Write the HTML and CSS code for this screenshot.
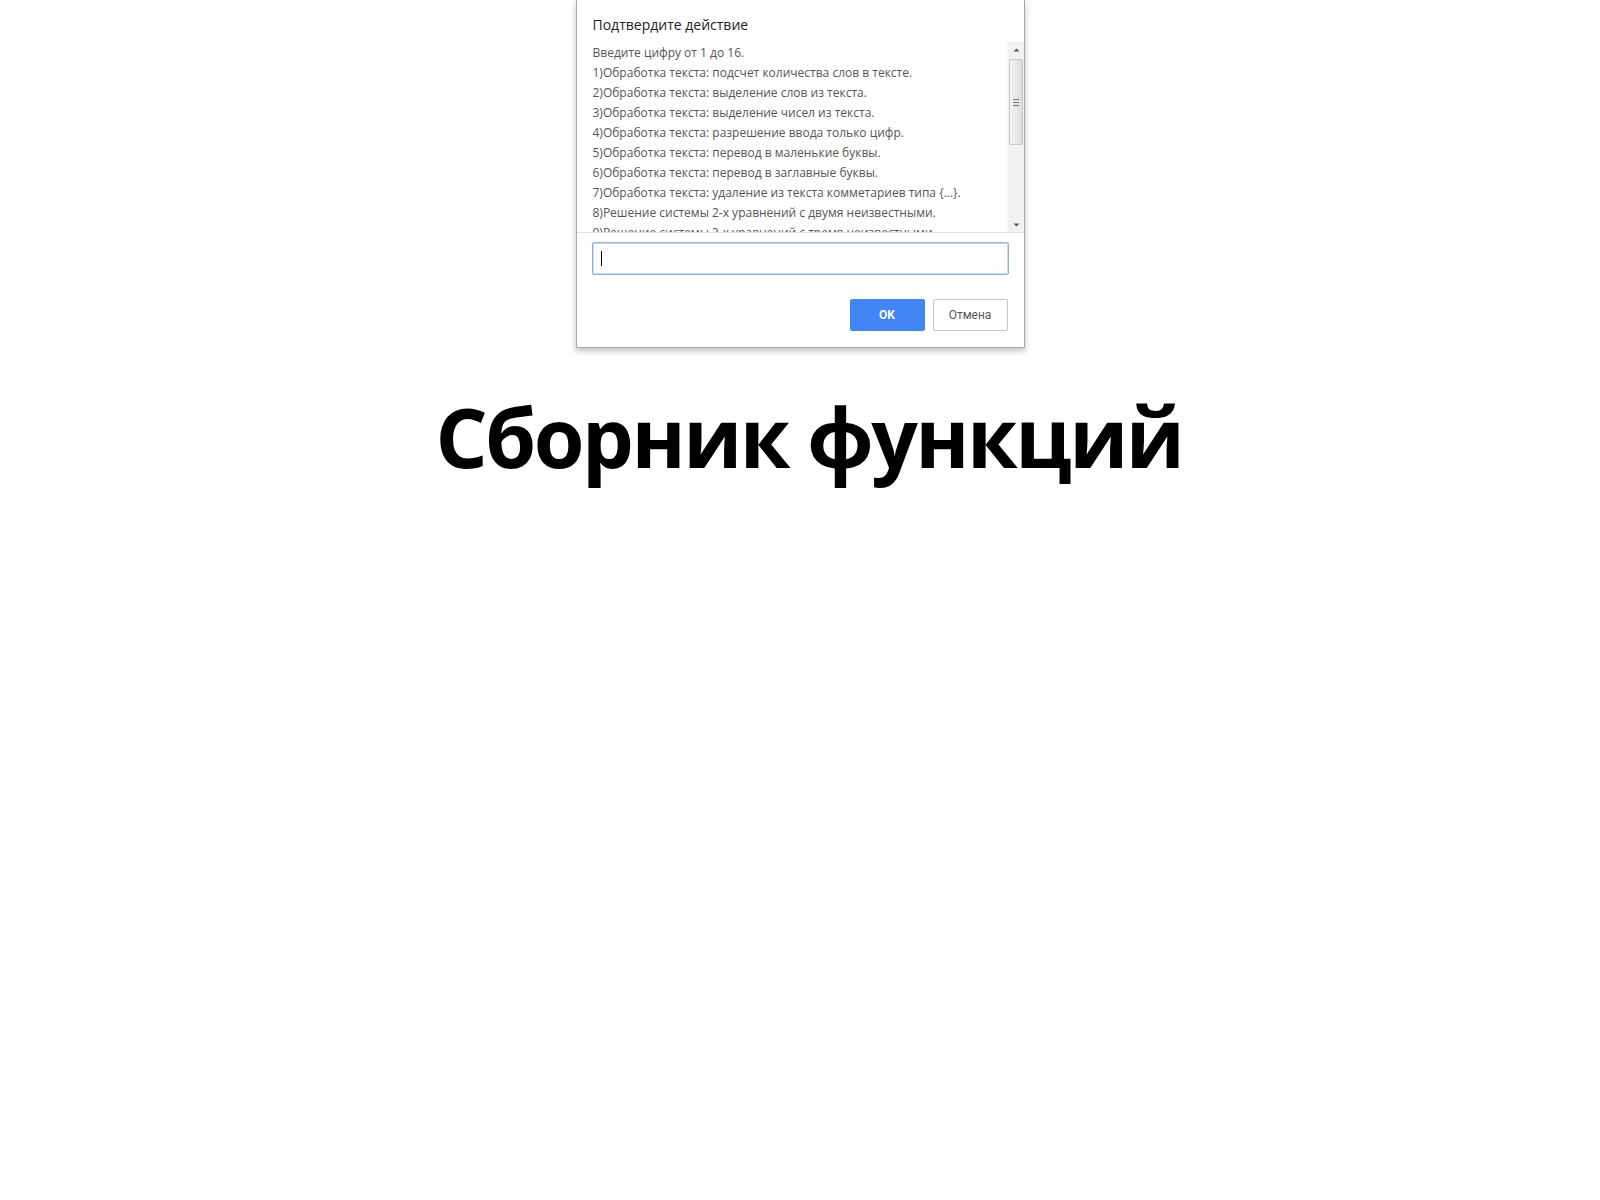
FILE: index.html
```html
<!DOCTYPE html>
<html lang="ru">
<head>
<meta charset="utf-8">
<title>Сборник функций</title>
<link rel="stylesheet" href="styles.css">
</head>
<body>
<div class="dialog">
  <div class="dialog-title">Подтвердите действие</div>
  <div class="message-box">
    <div class="message">
      <div class="line">Введите цифру от 1 до 16.</div>
      <div class="line">1)Обработка текста: подсчет количества слов в тексте.</div>
      <div class="line">2)Обработка текста: выделение слов из текста.</div>
      <div class="line">3)Обработка текста: выделение чисел из текста.</div>
      <div class="line">4)Обработка текста: разрешение ввода только цифр.</div>
      <div class="line">5)Обработка текста: перевод в маленькие буквы.</div>
      <div class="line">6)Обработка текста: перевод в заглавные буквы.</div>
      <div class="line">7)Обработка текста: удаление из текста комметариев типа {...}.</div>
      <div class="line">8)Решение системы 2-х уравнений с двумя неизвестными.</div>
      <div class="line">9)Решение системы 3-х уравнений с тремя неизвестными.</div>
    </div>
    <div class="scrollbar">
      <svg class="arrow" width="17" height="14" viewBox="0 0 17 14"><path d="M5.5 9.5h6L8.5 6.5z" fill="#555"/></svg>
      <div class="track">
        <div class="thumb">
          <svg width="8" height="7" viewBox="0 0 8 7"><path d="M1 0.5h6M1 3.5h6M1 6.5h6" stroke="#777" stroke-width="1"/></svg>
        </div>
      </div>
      <svg class="arrow" width="17" height="14" viewBox="0 0 17 14"><path d="M5.5 5.5h6L8.5 8.5z" fill="#555"/></svg>
    </div>
  </div>
  <div class="input-row">
    <div class="prompt-input"><span class="caret"></span></div>
  </div>
  <div class="buttons">
    <button class="btn btn-ok">OK</button>
    <button class="btn btn-cancel">Отмена</button>
  </div>
</div>
<h1 class="heading">Сборник функций</h1>
</body>
</html>
```
FILE: styles.css
```css
html, body {
  margin: 0;
  padding: 0;
  background: #fff;
}
body {
  font-family: "Open Sans", "Noto Sans", sans-serif;
}
.dialog {
  width: 447px;
  margin: 0 auto;
  border: 1px solid #a9a9a9;
  border-top: none;
  background: #fff;
  box-shadow: 0 3px 6px rgba(0,0,0,0.25);
}
.dialog-title {
  height: 42px;
  box-sizing: border-box;
  padding: 16px 0 0 16px;
  font-size: 14px;
  line-height: 18px;
  color: #222;
}
.message-box {
  display: flex;
  height: 190px;
  border-bottom: 1px solid #e4e4e4;
  overflow: hidden;
}
.message {
  flex: 1;
  padding: 1px 0 0 16px;
  font-size: 12px;
  line-height: 20px;
  color: #555;
  overflow: hidden;
  white-space: nowrap;
}
.scrollbar {
  width: 16px;
  display: flex;
  flex-direction: column;
  background: #f1f1f1;
  border-left: 1px solid #f7f7f7;
}
.arrow {
  display: block;
  flex: none;
}
.track {
  flex: 1;
  padding: 3px 1px 0 1px;
}
.thumb {
  height: 86px;
  box-sizing: border-box;
  border: 1px solid #c6c6c6;
  border-radius: 2px;
  background: linear-gradient(to right, #f4f4f4, #dcdcdc);
  display: flex;
  align-items: center;
  justify-content: center;
}
.input-row {
  padding: 9px 15px 0 15px;
}
.prompt-input {
  height: 33px;
  box-sizing: border-box;
  border: 1px solid #8fb0e6;
  border-radius: 2px;
  box-shadow: inset 0 0 0 1px #c9daf6;
  display: flex;
  align-items: center;
  padding-left: 8px;
}
.caret {
  width: 1px;
  height: 15px;
  background: #000;
}
.buttons {
  display: flex;
  justify-content: flex-end;
  gap: 8px;
  padding: 24px 16px 16px 0;
}
.btn {
  width: 75px;
  height: 32px;
  box-sizing: border-box;
  border-radius: 2px;
  font-family: "Roboto", "Open Sans", sans-serif;
  font-size: 12px;
  cursor: pointer;
}
.btn-ok {
  background: #4285f4;
  border: 1px solid #4285f4;
  color: #fff;
  font-weight: bold;
}
.btn-cancel {
  background: #fff;
  border: 1px solid #c6c6c6;
  color: #555;
}
.heading {
  margin: 32px 0 0 0;
  text-align: center;
  font-family: "Open Sans", "Noto Sans", sans-serif;
  font-weight: bold;
  font-size: 82px;
  line-height: 112px;
  letter-spacing: -2.5px;
  color: #000;
  padding-left: 18px;
}
```
